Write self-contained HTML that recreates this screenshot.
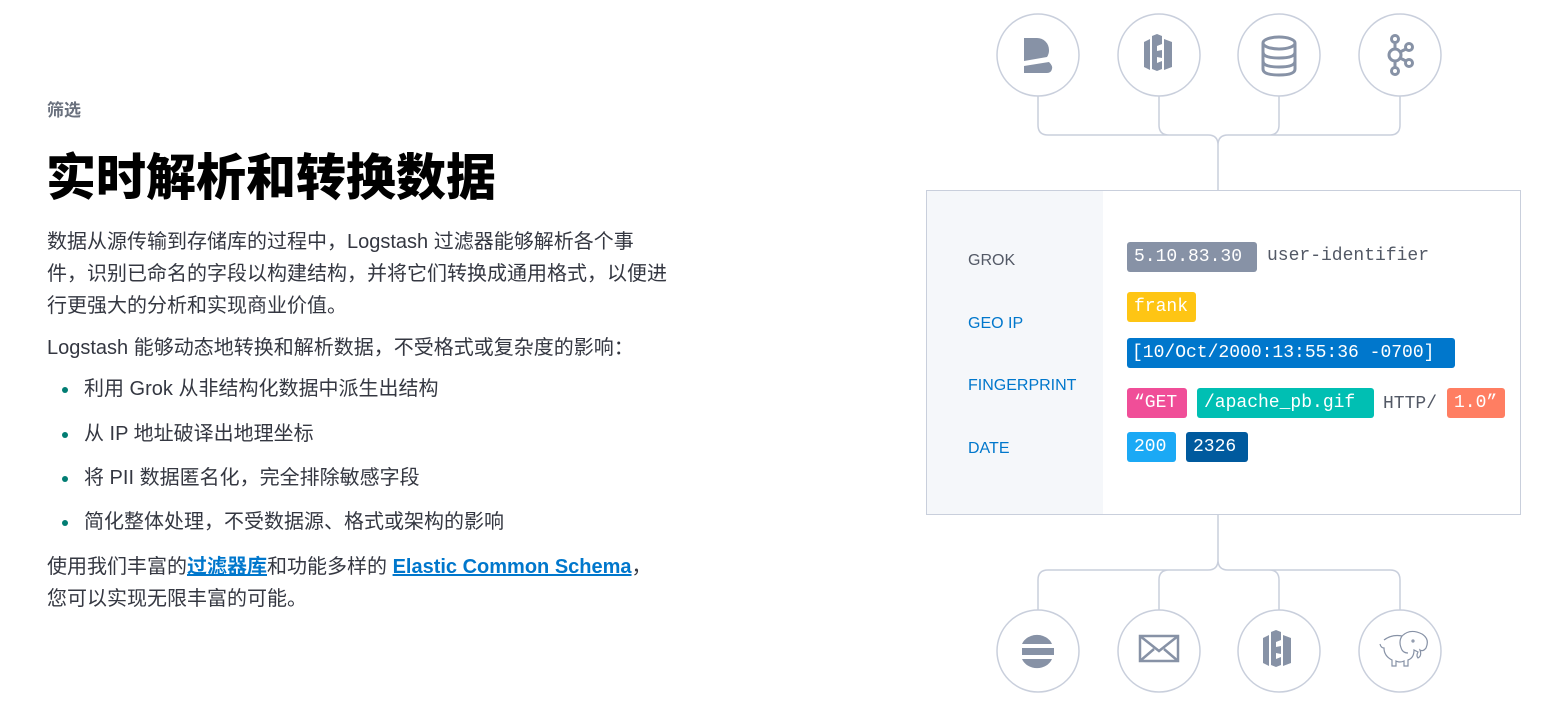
<!DOCTYPE html>
<html><head><meta charset="utf-8"><style>
*{margin:0;padding:0;box-sizing:border-box}
body{width:1561px;height:715px;background:#fff;position:relative;overflow:hidden;font-family:"Liberation Sans","Noto Sans CJK SC",sans-serif;color:#343741}
.a{position:absolute;white-space:nowrap}
.p{font-size:20px;line-height:32px}
.li{font-size:20px;line-height:24px}
.dot{position:absolute;left:-22px;top:10px;width:6px;height:6px;border-radius:50%;background:#017d73}
.lab{position:absolute;left:968px;font-size:16px;color:#0077cc;line-height:20px}
.tag{position:absolute;height:30px;border-radius:3px;color:#fff;font-family:"Liberation Mono",monospace;font-size:18px;line-height:30px;padding:0 0 0 7px}
.mono{position:absolute;font-family:"Liberation Mono",monospace;font-size:18px;line-height:30px;color:#535966}
a{color:#0077cc;font-weight:bold;text-decoration:underline}
</style></head><body>
<div class="a" style="left:47px;top:100px;font-size:17px;font-weight:bold;color:#69707d;line-height:22px">筛选</div>
<div class="a" style="left:46px;top:148px;font-size:50px;font-weight:900;color:#000;line-height:60px">实时解析和转换数据</div>
<div class="a p" style="left:47px;top:226px">数据从源传输到存储库的过程中，Logstash 过滤器能够解析各个事<br>件，识别已命名的字段以构建结构，并将它们转换成通用格式，以便进<br>行更强大的分析和实现商业价值。</div>
<div class="a p" style="left:47px;top:332px">Logstash 能够动态地转换和解析数据，不受格式或复杂度的影响：</div>
<div class="a li" style="left:84px;top:377px"><span class="dot"></span>利用 Grok 从非结构化数据中派生出结构</div>
<div class="a li" style="left:84px;top:422px"><span class="dot"></span>从 IP 地址破译出地理坐标</div>
<div class="a li" style="left:84px;top:466px"><span class="dot"></span>将 PII 数据匿名化，完全排除敏感字段</div>
<div class="a li" style="left:84px;top:510px"><span class="dot"></span>简化整体处理，不受数据源、格式或架构的影响</div>
<div class="a p" style="left:47px;top:551px">使用我们丰富的<a>过滤器库</a>和功能多样的 <a>Elastic Common Schema</a>，<br>您可以实现无限丰富的可能。</div>

<svg class="a" style="left:0;top:0" width="1561" height="715">
<g fill="none" stroke="#c9cfdc" stroke-width="1.5">
<circle cx="1038" cy="55" r="41"/><circle cx="1159" cy="55" r="41"/><circle cx="1279" cy="55" r="41"/><circle cx="1400" cy="55" r="41"/>
<circle cx="1038" cy="651" r="41"/><circle cx="1159" cy="651" r="41"/><circle cx="1279" cy="651" r="41"/><circle cx="1400" cy="651" r="41"/>
<path d="M1038 96V125q0 10 10 10H1208q10 0 10 10V191M1159 96V125q0 10 10 10H1208M1279 96V125q0 10-10 10H1228q-10 0-10 10M1400 96V125q0 10-10 10H1228"/>
<path d="M1218 514V560q0 10-10 10H1048q-10 0-10 10V610M1159 610V580q0-10 10-10M1218 560q0 10 10 10H1390q10 0 10 10V610M1279 610V580q0-10-10-10"/>
</g>
<g fill="#8792a6">
<path d="M1024 38h13a12 12 0 0 1 12 12 12 12 0 0 1-2 7L1024 61z"/><path d="M1024 66L1049 62q4 4 3 7-1 4-5 4h-23z"/>
<path d="M1144 42l6-3v31l-6-3zM1152 36l5-2 5 2v8l-5 2v5l5-1v8l-5-1v6l5-2v8l-5 2-5-2zM1164 39l8 3v25l-8 3z"/>
</g>
<g fill="none" stroke="#8792a6" stroke-width="3">
<ellipse cx="1279" cy="43" rx="16" ry="6"/><path d="M1263 43v26q0 6 16 6t16-6V43M1263 52q0 6 16 6t16-6M1263 61q0 6 16 6t16-6"/>
<circle cx="1395" cy="55" r="6"/><circle cx="1395" cy="39" r="3.5"/><circle cx="1395" cy="71" r="3.5"/><circle cx="1409" cy="47" r="3.5"/><circle cx="1409" cy="63" r="3.5"/>
<path d="M1395 42.5v6.5M1395 61v6.5M1400 52l6-3M1400 58l6 3"/>
<rect x="1140" y="636" width="38" height="25" stroke-width="2.5"/><path d="M1140 636l19 15 19-15M1140 661l14-12M1178 661l-14-12" stroke-width="2.5"/>
</g>
<g fill="#8792a6">
<path d="M1022 644a16 14 0 0 1 30 0zM1022 648h32v7h-32zM1022 659h30a16 14 0 0 1-30 0z"/>
<path d="M1263 638l6-3v31l-6-3zM1271 632l5-2 5 2v8l-5 2v5l5-1v8l-5-1v6l5-2v8l-5 2-5-2zM1283 635l8 3v25l-8 3z"/>
</g>
<g fill="none" stroke="#8792a6" stroke-width="1.2">
<path d="M1384 640q8-6 18-4 8-8 20-2 8 5 4 14-3 4-6 2 2 6-2 8-2-2 0-6l-4-2q0 8-6 10v6h-4v-5q-4 2-8 0v5h-4v-6q-8-4-8-12-3 0-4-4"/>
<path d="M1402 636q-4 6 0 14 2 3 6 3"/><circle cx="1413" cy="641" r="1"/>
</g>
</svg>

<div class="a" style="left:926px;top:190px;width:595px;height:325px;border:1.5px solid #c9cfdc;background:#fff">
<div style="position:absolute;left:0;top:0;width:176px;height:100%;background:#f5f7fa"></div>
</div>
<div class="lab" style="top:251px;color:#535966">GROK</div>
<div class="lab" style="top:314px">GEO IP</div>
<div class="lab" style="top:376px">FINGERPRINT</div>
<div class="lab" style="top:439px">DATE</div>

<div class="tag" style="left:1127px;top:242px;width:130px;background:#8792a6">5.10.83.30</div>
<div class="mono" style="left:1267px;top:241px">user-identifier</div>
<div class="tag" style="left:1127px;top:292px;width:69px;background:#fec514">frank</div>
<div class="tag" style="left:1127px;top:338px;width:328px;background:#0077cc;padding-left:5px">[10/Oct/2000:13:55:36 -0700]</div>
<div class="tag" style="left:1127px;top:388px;width:60px;background:#f04e98">“GET</div>
<div class="tag" style="left:1197px;top:388px;width:177px;background:#00bfb3">/apache_pb.gif</div>
<div class="mono" style="left:1383px;top:389px">HTTP/</div>
<div class="tag" style="left:1447px;top:388px;width:58px;background:#ff7e62">1.0”</div>
<div class="tag" style="left:1127px;top:432px;width:49px;background:#1ba9f5">200</div>
<div class="tag" style="left:1186px;top:432px;width:62px;background:#005a9e">2326</div>
</body></html>
